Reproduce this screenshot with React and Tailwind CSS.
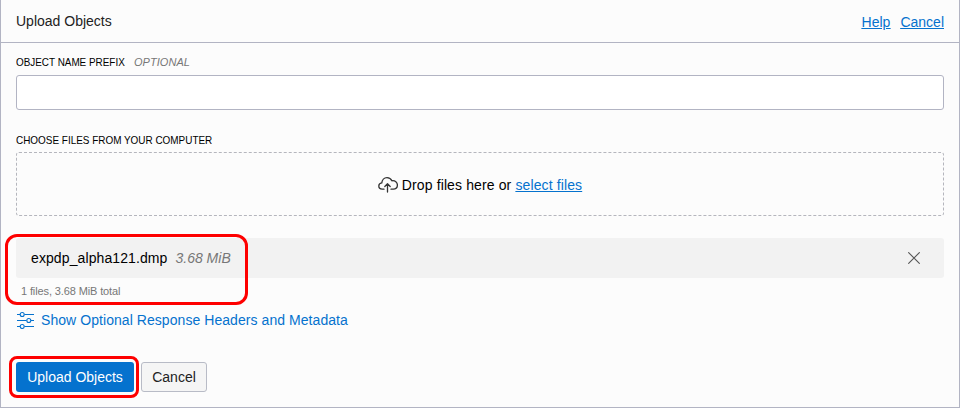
import React from "react";

function CloudUploadIcon() {
  return (
    <svg className="block h-5 w-5 shrink-0" viewBox="0 0 20 20" fill="none" stroke="#333" strokeWidth="1.3" strokeLinecap="round" strokeLinejoin="round">
      <path d="M6 14.200H4.200C2.100 14.200.8 12.900.8 11.100c0-1.800 1.200-3 3-3.200C4 4.900 6.100 2.600 9 2.600c2.300 0 4 1.200 4.900 3.200 3.200-.5 5.500 1.600 5.500 4.300 0 2.400-1.700 4.100-4.100 4.100H13" />
      <path d="M9.500 17V8.800M6.800 11.500l2.700-2.700 2.700 2.700" />
    </svg>
  );
}

function SlidersIcon() {
  return (
    <svg className="block h-[18px] w-[18px] shrink-0" viewBox="0 0 18 18" fill="none" stroke="#0572ce" strokeWidth="1.1">
      <path d="M1 3.500h3M8.500 3.500H18M1 9.500h9.500M15 9.500h3M1 15.500h3M8.500 15.500H18" />
      <circle cx="6.200" cy="3.500" r="2" />
      <circle cx="12.800" cy="9.500" r="2" />
      <circle cx="6.200" cy="15.500" r="2" />
    </svg>
  );
}

function Header() {
  return (
    <header className="flex h-[43px] items-center justify-between border-b border-[#b2b4c3] pl-[15px] pr-[15px] leading-4">
      <h1 className="text-[#222]">Upload Objects</h1>
      <nav className="flex gap-2.5 pt-0.5 text-[#0572ce] underline">
        <a href="#help">Help</a>
        <a href="#cancel">Cancel</a>
      </nav>
    </header>
  );
}

export default function App() {
  return (
    <div className="h-[408px] w-[960px] overflow-hidden border-x border-b border-[#b2b4c3] bg-[#fcfcfc] font-['Liberation_Sans',Arial,sans-serif] text-sm leading-4 text-black">
      <Header />
      <main className="px-[15px] pt-3">
        <label htmlFor="prefix" className="flex h-5 gap-2.5 text-[11px] leading-[14px]">
          <span className="block w-[108px] origin-left scale-x-[0.9] whitespace-nowrap">OBJECT NAME PREFIX</span>
          <span className="italic tracking-[0.04px] text-[#777]">OPTIONAL</span>
        </label>
        <input id="prefix" className="block h-[35px] w-full rounded-[3px] border border-[#b2b4c3] bg-white px-2 outline-none" />

        <div className="mt-[23px] h-[19px] origin-left scale-x-[0.903] text-[11px] leading-[14px]">CHOOSE FILES FROM YOUR COMPUTER</div>
        <div className="flex h-16 items-center justify-center gap-1 rounded-[3px] border border-dashed border-[#b5b6bd] pt-px">
          <CloudUploadIcon />
          <span className="tracking-[0.12px]">
            Drop files here or <a href="#select" className="text-[#0572ce] underline">select files</a>
          </span>
        </div>

        <section className="relative mt-[22px]">
          <div className="flex h-10 items-center justify-between rounded-[3px] bg-[#f2f2f2] pl-[15px] pr-6">
            <div className="flex gap-2">
              <span className="tracking-[0.1px]">expdp_alpha121.dmp</span>
              <span className="italic text-[#777]">3.68 MiB</span>
            </div>
            <svg className="h-3 w-3" viewBox="0 0 12 12" fill="none" stroke="#555" strokeWidth="1.100">
              <path d="M.3.3l11.400 11.400M11.700.3L.3 11.700" />
            </svg>
          </div>
          <div className="h-[34px] pl-[5px] pt-[6px] text-[11px] leading-[14px] tracking-[-0.12px] text-[#777]">1 files, 3.68 MiB total</div>
          <div className="absolute -left-[11px] -top-1 h-[71px] w-[243px] rounded-[12px] border-[3px] border-[#fe0000]" />
        </section>

        <a href="#headers" className="flex h-4 items-center gap-[7px] text-[#0572ce]">
          <SlidersIcon />
          <span className="tracking-[0.06px]">Show Optional Response Headers and Metadata</span>
        </a>

        <div className="mt-[34px] flex gap-[7px]">
          <div className="relative">
            <button className="block h-[30px] w-[118px] rounded-[3px] bg-[#0572ce] text-white">Upload Objects</button>
            <div className="absolute -left-[7px] -top-1.5 h-[42px] w-[130px] rounded-[8px] border-[3px] border-[#fe0000]" />
          </div>
          <button className="h-[30px] w-[66px] rounded-[3px] border border-[#b8bbc6] bg-[#f5f5f5] text-[#222]">Cancel</button>
        </div>
      </main>
    </div>
  );
}
